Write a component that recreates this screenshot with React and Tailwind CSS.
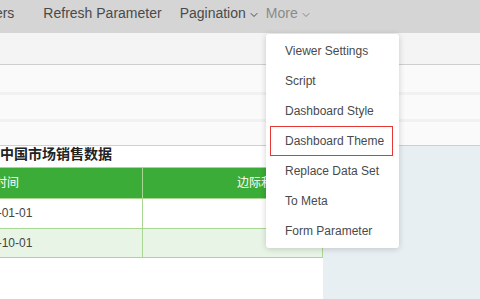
import { ChevronDown } from "lucide-react";

const menuItems = [
  "Viewer Settings",
  "Script",
  "Dashboard Style",
  "Dashboard Theme",
  "Replace Data Set",
  "To Meta",
  "Form Parameter",
];

const rows = [
  { date: "2014-01-01", alt: false },
  { date: "2014-10-01", alt: true },
];

function App() {
  return (
    <div
      className="relative h-[299px] w-[480px] overflow-hidden bg-white"
      style={{ fontFamily: '"Liberation Sans", Arial, "Noto Sans CJK SC", sans-serif' }}
    >
      {/* toolbar */}
      <div className="flex h-[33px] items-start bg-[#d5d5d5] pt-[5px] text-[14px] leading-[17px] text-[#4a4a4a]">
        <span className="-ml-[9px]">ters</span>
        <span className="ml-[29px]">Refresh Parameter</span>
        <span className="ml-[18px] flex items-center">
          Pagination
          <ChevronDown size={12} strokeWidth={2} className="ml-[2px] mt-[2px]" />
        </span>
        <span className="ml-[6px] flex items-center text-[#8a8a8a]">
          More
          <ChevronDown size={12} strokeWidth={2} className="ml-[2px] mt-[2px]" />
        </span>
      </div>

      {/* band */}
      <div className="h-[32px] border-b border-[#cfcfcf] bg-[#f4f4f4]" />

      {/* rows */}
      <div className="flex flex-col gap-[3px] border-b border-[#cfcfcf] bg-[#f1f1f1]">
        <div className="h-[27px] bg-[#fafafa]" />
        <div className="h-[24px] bg-[#fafafa]" />
        <div className="h-[23px] bg-[#fafafa]" />
      </div>

      <div className="flex h-[200px]">
        <div className="w-[323px] overflow-hidden">
          <div className="h-[21px] pt-px text-[14px] font-bold leading-[14px] text-[#222]">
            中国市场销售数据
          </div>
          <div className="border-t border-[#a9d692]">
            <div className="flex h-[30px] bg-[#3aac37] text-[12px] leading-[30px] text-white">
              <div className="w-[143px] overflow-hidden border-r border-[#a9d692]">
                <span className="-ml-[5px] block whitespace-nowrap">时间</span>
              </div>
              <div className="flex-1 border-r border-[#a9d692] pl-[94px]">边际利润</div>
            </div>
            {rows.map((r) => (
              <div
                key={r.date}
                className={
                  "flex h-[30px] border-t border-[#a9d692] text-[12px] leading-[29px] text-[#444] " +
                  (r.alt ? "border-b bg-[#e8f5e6]" : "bg-white")
                }
              >
                <div className="w-[143px] overflow-hidden border-r border-[#a9d692]">
                  <span className="-ml-[29px] block whitespace-nowrap">{r.date}</span>
                </div>
                <div className="flex-1 border-r border-[#a9d692]" />
              </div>
            ))}
          </div>
        </div>
        <div className="flex-1 bg-[#e8eff3]" />
      </div>

      {/* More dropdown */}
      <div className="absolute left-[266px] top-[34px] w-[133px] rounded-[3px] bg-white pb-[2px] pt-[2px] shadow-[0_1px_6px_rgba(0,0,0,0.18)]">
        {menuItems.map((item) => (
          <div key={item} className="h-[30px] pl-[4px] pr-[6px]">
            {item === "Dashboard Theme" ? (
              <div className="h-[30px] border border-[#e53935] pl-[14px] text-[12px] leading-[28px] text-[#4a4a4a]">
                {item}
              </div>
            ) : (
              <div className="h-[30px] pl-[15px] text-[12px] leading-[30px] text-[#4a4a4a]">{item}</div>
            )}
          </div>
        ))}
      </div>
    </div>
  );
}

export default App;
